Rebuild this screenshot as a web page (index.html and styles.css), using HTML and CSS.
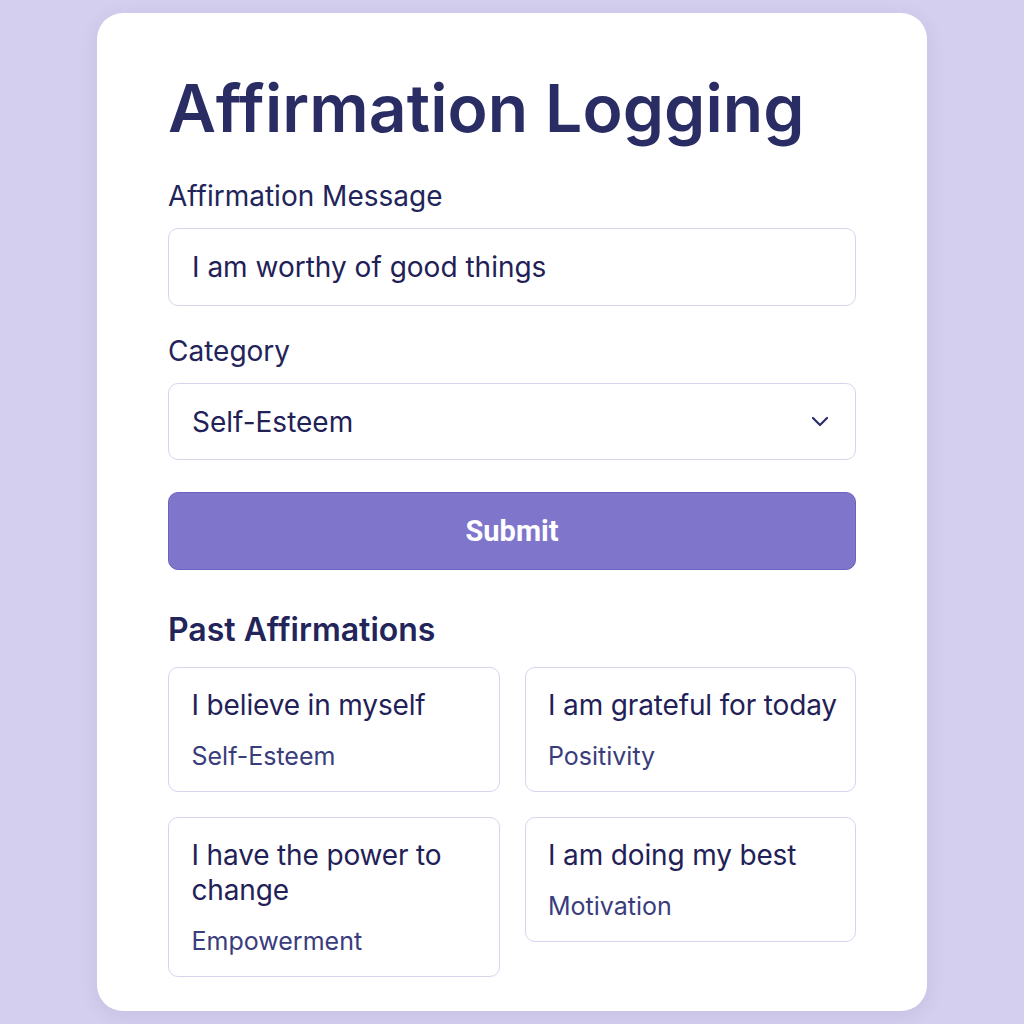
FILE: index.html
```html
<!DOCTYPE html>
<html>
<head>
<meta charset="utf-8">
<link rel="stylesheet" href="styles.css">
</head>
<body>
<main class="card">
  <h1 class="title">Affirmation Logging</h1>
  <label class="label">Affirmation Message</label>
  <div class="field">I am worthy of good things</div>
  <label class="label label-gap">Category</label>
  <div class="field select">
    <span>Self-Esteem</span>
    <svg class="chev" width="20" height="12" viewBox="0 0 20 12"><path d="M3 2 L10 9 L17 2" fill="none" stroke="#2b2e6a" stroke-width="2.2" stroke-linecap="round" stroke-linejoin="round"/></svg>
  </div>
  <button class="submit">Submit</button>
  <h2 class="subtitle">Past Affirmations</h2>
  <div class="grid">
    <div class="item"><div class="msg">I believe in myself</div><div class="cat">Self-Esteem</div></div>
    <div class="item"><div class="msg">I am grateful for today</div><div class="cat">Positivity</div></div>
    <div class="item"><div class="msg">I have the power to change</div><div class="cat">Empowerment</div></div>
    <div class="item"><div class="msg">I am doing my best</div><div class="cat">Motivation</div></div>
  </div>
</main>
</body>
</html>
```

FILE: styles.css
```css
html, body { margin: 0; padding: 0; }
body {
  background: #d4cfee;
  font-family: Inter, "Noto Sans", sans-serif;
  color: #22245a;
  width: 1024px;
  height: 1024px;
  overflow: hidden;
}
.card {
  box-sizing: border-box;
  margin: 13px 0 0 97px;
  width: 830px;
  height: 998px;
  background: #fff;
  border-radius: 26px;
  padding: 55px 71px 36px 71px;
  box-shadow: 0 4px 18px rgba(90, 80, 160, 0.12);
  display: flex;
  flex-direction: column;
}
.title {
  margin: 0;
  font-size: 66px;
  line-height: 80px;
  font-weight: 600;
  color: #2a2d63;
  letter-spacing: 0.1px;
}
.label {
  display: block;
  margin-top: 31px;
  font-size: 28px;
  line-height: 34px;
  color: #22245a;
}
.label-gap { margin-top: 28px; }
.field {
  box-sizing: border-box;
  flex: none;
  margin-top: 15px;
  height: 78px;
  border: 1.5px solid #d8d4ee;
  border-radius: 10px;
  padding: 0 23px;
  display: flex;
  align-items: center;
  font-size: 28px;
  color: #1f2157;
}
.select { justify-content: space-between; height: 77px; }
.chev { margin-right: 2px; }
.submit {
  flex: none;
  margin-top: 32px;
  height: 78px;
  border: 1.5px solid #6b61c2;
  border-radius: 10px;
  background: #7f76cc;
  color: #fff;
  font-family: Roboto, sans-serif;
  font-weight: 700;
  font-size: 29px;
  cursor: pointer;
}
.subtitle {
  margin: 41px 0 0 0;
  font-size: 32px;
  line-height: 38px;
  font-weight: 600;
  color: #22245a;
}
.grid {
  margin-top: 18px;
  display: grid;
  grid-template-columns: 1fr 1fr;
  column-gap: 25px;
  row-gap: 25px;
  align-items: start;
}
.item {
  border: 1.5px solid #d8d4ee;
  border-radius: 10px;
  padding: 20px 4px 20px 22.5px;
}
.msg {
  font-size: 28px;
  line-height: 35px;
  letter-spacing: -0.15px;
  color: #1f2157;
}
.cat {
  margin-top: 18px;
  font-size: 25px;
  line-height: 30px;
  color: #3a3d7c;
}
```
